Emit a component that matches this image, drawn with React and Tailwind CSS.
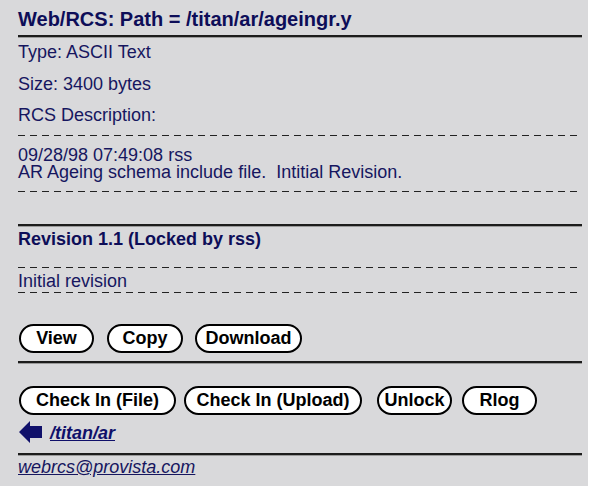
export default function App() {
  const dashed =
    "h-px w-[564px] bg-[repeating-linear-gradient(90deg,#222_0_7px,transparent_7px_12px)]";
  const rule = "h-[2px] w-[564px] bg-[#1c1c1c] shadow-[0_1px_0_#9a9a9a]";
  const btn =
    "flex h-[29px] items-center justify-center rounded-full border-2 border-black bg-white text-[18px] font-bold text-black";

  return (
    <div className="flex min-h-[486px] bg-white font-['Liberation_Sans',Arial,sans-serif]">
      <div className="w-[588px] bg-[#d9d9db] pl-[18px] text-[#16165f]">
        <div className="pt-[8px] text-[20px] font-bold leading-[22px] text-[#0d0d58]">
          Web/RCS: Path = /titan/ar/ageingr.y
        </div>
        <div className={`mt-[5px] ${rule}`} />

        <div className="mt-[5px] h-[32px] text-[18px] leading-[20px]">Type: ASCII Text</div>
        <div className="h-[31px] text-[18px] leading-[20px]">Size: 3400 bytes</div>
        <div className="h-[20px] text-[18px] leading-[20px]">RCS Description:</div>

        <div className={`mt-[10px] ${dashed}`} />
        <div className="mt-[11px] text-[18px] leading-[17px]">
          <div>09/28/98 07:49:08 rss</div>
          <div className="whitespace-pre">AR Ageing schema include file.  Intitial Revision.</div>
        </div>
        <div className={`mt-[10px] ${dashed}`} />

        <div className={`mt-[32px] ${rule}`} />
        <div className="mt-[3px] text-[18px] font-bold leading-[20px] text-[#0d0d58]">
          Revision 1.1 (Locked by rss)
        </div>
        <div className={`mt-[18px] ${dashed}`} />
        <div className="mt-[3px] text-[18px] leading-[20px]">Initial revision</div>
        <div className={`mt-[1px] ${dashed}`} />

        <div className="mt-[31px] flex">
          <button className={`ml-[1px] w-[75px] ${btn}`}>View</button>
          <button className={`ml-[13px] w-[76px] ${btn}`}>Copy</button>
          <button className={`ml-[12px] w-[107px] ${btn}`}>Download</button>
        </div>
        <div className={`mt-[8px] ${rule}`} />

        <div className="mt-[23px] flex">
          <button className={`ml-[1px] w-[157px] ${btn}`}>Check In (File)</button>
          <button className={`ml-[8px] w-[178px] ${btn}`}>Check In (Upload)</button>
          <button className={`ml-[15px] w-[75px] ${btn}`}>Unlock</button>
          <button className={`ml-[10px] w-[75px] ${btn}`}>Rlog</button>
        </div>

        <div className="flex items-start">
          <svg className="ml-[1px] mt-[6px]" width="24" height="22" viewBox="0 0 24 22">
            <polygon points="0,11 11,0 11,5 23,5 23,17 11,17 11,22" fill="#10106a" />
          </svg>
          <a
            href="#"
            className="ml-[7px] mt-[8px] text-[18px] font-bold italic leading-[20px] text-[#10106a] underline"
          >
            /titan/ar
          </a>
        </div>
        <div className={`mt-[10px] ${rule}`} />
        <a href="#" className="mt-[2px] block text-[18px] italic leading-[20px] text-[#16165f] underline">
          webrcs@provista.com
        </a>
      </div>
    </div>
  );
}
